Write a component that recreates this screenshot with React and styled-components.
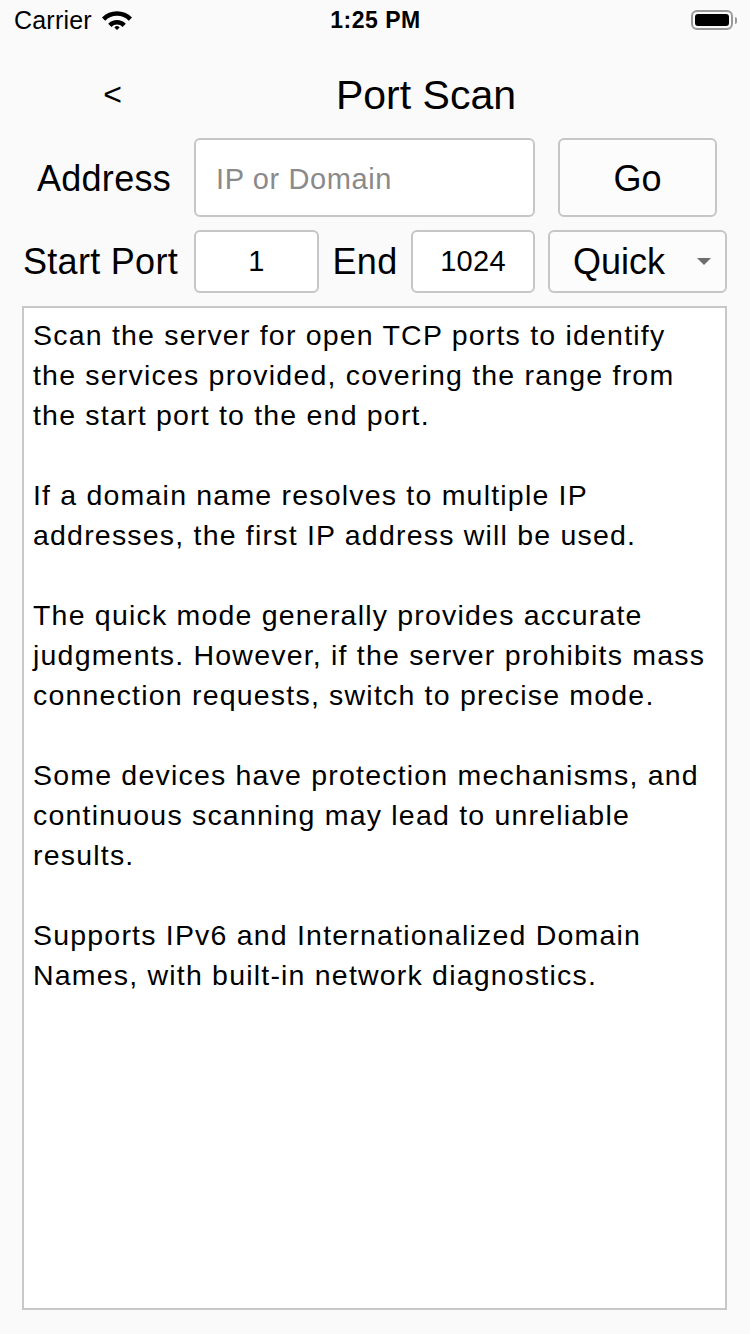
import React from "react";
import styled, { createGlobalStyle } from "styled-components";

const Global = createGlobalStyle`
  html, body { margin: 0; padding: 0; background: #fafafa; }
  body { font-family: "Liberation Sans", Arial, sans-serif; color: #000; }
  * { box-sizing: border-box; }
`;

const Screen = styled.div`
  width: 750px;
  height: 1334px;
  display: flex;
  flex-direction: column;
  background: #fafafa;
`;

const StatusBar = styled.div`
  height: 40px;
  display: grid;
  grid-template-columns: 1fr auto 1fr;
  align-items: center;
  padding: 0 13px 0 14px;
`;

const Carrier = styled.div`
  display: flex;
  align-items: center;
  gap: 8px;
  font-size: 25px;
  letter-spacing: 0.2px;
`;

const Time = styled.div`
  font-size: 23px;
  font-weight: 700;
  letter-spacing: 0.5px;
`;

const BatteryWrap = styled.div`
  justify-self: end;
  display: flex;
  align-items: center;
  gap: 2px;
`;

const BatteryBody = styled.div`
  width: 42px;
  height: 20px;
  border: 2px solid #9a9a9a;
  border-radius: 6px;
  padding: 2px;
  display: flex;
`;

const BatteryFill = styled.div`
  flex: 1;
  background: #000;
  border-radius: 3px;
`;

const BatteryNub = styled.div`
  width: 2px;
  height: 7px;
  background: #9a9a9a;
  border-radius: 0 2px 2px 0;
`;

const NavBar = styled.div`
  height: 98px;
  padding-top: 12px;
  display: grid;
  grid-template-columns: 225px 1fr 123px;
  align-items: center;
`;

const Back = styled.div`
  font-size: 32px;
  text-align: center;
  line-height: 1;
  padding-bottom: 2px;
`;

const Title = styled.div`
  font-size: 41px;
  text-align: center;
`;

const Row = styled.div`
  display: flex;
  align-items: center;
  height: ${(p) => p.$h}px;
  margin-bottom: 13px;
  padding-left: 22px;
`;

const Label = styled.div`
  width: ${(p) => p.$w}px;
  padding-right: ${(p) => p.$pr || 0}px;
  padding-top: ${(p) => p.$pt || 0}px;
  font-size: 36px;
  text-align: center;
  white-space: nowrap;
  letter-spacing: 0.3px;
`;

const Field = styled.div`
  width: ${(p) => p.$w}px;
  height: 100%;
  background: #fff;
  border: 2px solid #c6c6c6;
  border-radius: 6px;
  display: flex;
  align-items: center;
  justify-content: ${(p) => (p.$center ? "center" : "flex-start")};
  padding: ${(p) => (p.$center ? "0" : "3px 20px 0")};
  font-size: 29px;
  letter-spacing: ${(p) => (p.$placeholder ? "0.6px" : "0.3px")};
  color: ${(p) => (p.$placeholder ? "#8a8a8a" : "#000")};
`;

const Button = styled.div`
  width: ${(p) => p.$w}px;
  height: 100%;
  margin-left: ${(p) => p.$ml}px;
  background: #fcfcfc;
  border: 2px solid #c6c6c6;
  border-radius: 6px;
  display: flex;
  align-items: center;
  justify-content: ${(p) => (p.$between ? "space-between" : "center")};
  padding: ${(p) => (p.$between ? "0 14px 0 23px" : "3px 0 0")};
  font-size: 36px;
`;

const Caret = styled.div`
  width: 0;
  height: 0;
  border-left: 7px solid transparent;
  border-right: 7px solid transparent;
  border-top: 7px solid #6e6e6e;
`;

const TextBox = styled.div`
  flex: 1;
  margin: 0 23px 24px 22px;
  background: #fff;
  border: 2px solid #c8c8c8;
  padding: 7px 9px;
  font-size: 28.5px;
  line-height: 40px;
  letter-spacing: 1.2px;
`;

const Para = styled.p`
  margin: 0 0 40px 0;
  white-space: nowrap;
`;

const paragraphs = [
  [
    "Scan the server for open TCP ports to identify",
    "the services provided, covering the range from",
    "the start port to the end port.",
  ],
  [
    "If a domain name resolves to multiple IP",
    "addresses, the first IP address will be used.",
  ],
  [
    "The quick mode generally provides accurate",
    "judgments. However, if the server prohibits mass",
    "connection requests, switch to precise mode.",
  ],
  [
    "Some devices have protection mechanisms, and",
    "continuous scanning may lead to unreliable",
    "results.",
  ],
  [
    "Supports IPv6 and Internationalized Domain",
    "Names, with built-in network diagnostics.",
  ],
];

const Wifi = () => (
  <svg width="34" height="22" viewBox="0 0 34 22">
    <path d="M2 8.5 A21 21 0 0 1 32 8.5 L28.8 11.7 A16.5 16.5 0 0 0 5.2 11.7 Z" fill="#000" />
    <path d="M8.2 14.7 A12.4 12.4 0 0 1 25.8 14.7 L22.6 17.9 A8 8 0 0 0 11.4 17.9 Z" fill="#000" />
    <path d="M14.4 20.9 A3.7 3.7 0 0 1 19.6 20.9 L17 23.5 Z" fill="#000" transform="translate(0,-2.5)" />
  </svg>
);

export default function App() {
  return (
    <>
      <Global />
      <Screen>
        <StatusBar>
          <Carrier>
            Carrier
            <Wifi />
          </Carrier>
          <Time>1:25 PM</Time>
          <BatteryWrap>
            <BatteryBody>
              <BatteryFill />
            </BatteryBody>
            <BatteryNub />
          </BatteryWrap>
        </StatusBar>
        <NavBar>
          <Back>&lt;</Back>
          <Title>Port Scan</Title>
          <div />
        </NavBar>
        <Row $h={79}>
          <Label $w={172} $pr={8} $pt={3}>Address</Label>
          <Field $w={341} $placeholder>IP or Domain</Field>
          <Button $w={159} $ml={23}>Go</Button>
        </Row>
        <Row $h={63}>
          <Label $w={172} $pr={15}>Start Port</Label>
          <Field $w={125} $center>1</Field>
          <Label $w={92}>End</Label>
          <Field $w={124} $center>1024</Field>
          <Button $w={179} $ml={13} $between>
            Quick
            <Caret />
          </Button>
        </Row>
        <TextBox>
          {paragraphs.map((lines, i) => (
            <Para key={i}>
              {lines.map((l, j) => (
                <React.Fragment key={j}>
                  {l}
                  {j < lines.length - 1 && <br />}
                </React.Fragment>
              ))}
            </Para>
          ))}
        </TextBox>
      </Screen>
    </>
  );
}
